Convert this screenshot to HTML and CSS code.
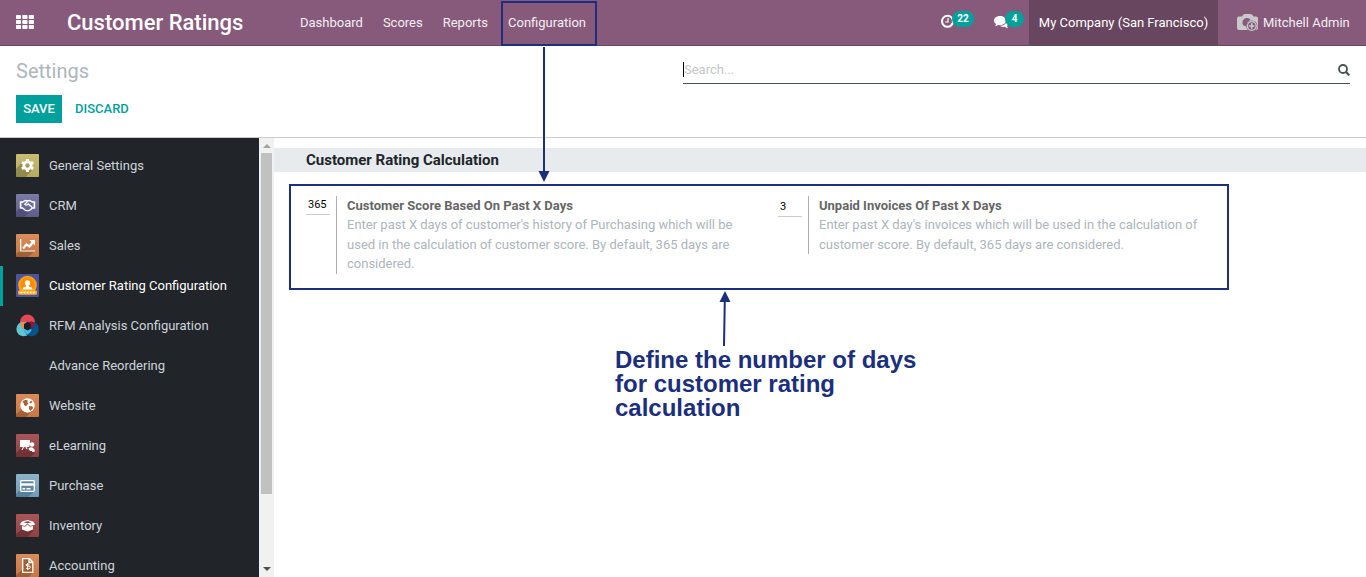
FILE: index.html
```html
<!DOCTYPE html>
<html lang="en">
<head>
<meta charset="utf-8">
<title>Settings - Customer Ratings</title>
<link rel="stylesheet" href="styles.css">
</head>
<body>
<header class="navbar">
  <svg class="apps" width="18" height="14" viewBox="0 0 18 14" fill="#fff"><rect width="5" height="4" rx=".8"/><rect x="6.3" width="5.2" height="4" rx=".8"/><rect x="12.8" width="5.2" height="4" rx=".8"/><rect y="5" width="5" height="4" rx=".8"/><rect x="6.3" y="5" width="5.2" height="4" rx=".8"/><rect x="12.8" y="5" width="5.2" height="4" rx=".8"/><rect y="10" width="5" height="4" rx=".8"/><rect x="6.3" y="10" width="5.2" height="4" rx=".8"/><rect x="12.8" y="10" width="5.2" height="4" rx=".8"/></svg>
  <div class="brand">Customer Ratings</div>
  <nav class="menu"><a>Dashboard</a><a>Scores</a><a>Reports</a><a class="marked">Configuration</a></nav>
  <div class="systray">
    <div class="tray clock"><svg width="13" height="14" viewBox="0 0 13 14" fill="none" stroke="#fff"><circle cx="6.5" cy="7.300" r="5.500" stroke-width="2"/><path d="M7 4v4H4.200" stroke-width="1.200"/></svg><span class="badge">22</span></div>
    <div class="tray chat"><svg width="15" height="13" viewBox="0 0 15 13" fill="#fff"><path d="M6 0c3.300 0 6 2 6 4.500S9.300 9 6 9c-.6 0-1.100 0-1.600-.2C3.300 9.700 2 10.200.9 10.200c.7-.7 1-1.300 1.100-2.200C.8 7.200 0 5.900 0 4.500 0 2 2.700 0 6 0z"/><path d="M13 3.400c1.200.8 2 1.900 2 3.200 0 1.400-.8 2.500-2 3.300.1.900.5 1.600 1.200 2.300-1.300 0-2.500-.5-3.600-1.400-1.900.4-3.900 0-5.300-1C9.500 9.900 13.300 7.700 13 3.400z"/></svg><span class="badge">4</span></div>
    <div class="company">My Company (San Francisco)</div>
    <div class="user"><svg width="22" height="18" viewBox="0 0 22 18"><path d="M2 2.500h3L6.500.6Q7 0 7.600 0h6.300q.6 0 1 .6l1.600 1.900H19q2 0 2 2V14q0 2-2 2H2q-2 0-2-2V4.500q0-2 2-2z" fill="#c9c9c9"/><path d="M6.500 11.500A4.400 4.400 0 0 1 13.500 5.700L10 8.500v4z" fill="#875a7b"/><circle cx="14.800" cy="12" r="5.600" fill="#875a7b"/><circle cx="14.800" cy="12" r="4.400" fill="#875a7b" stroke="#c9c9c9" stroke-width="1.400"/><path d="M14.800 9.300v5.400M12.100 12h5.400" stroke="#c9c9c9" stroke-width="1.600"/></svg>Mitchell Admin</div>
  </div>
</header>
<section class="control">
  <div class="control-left">
    <h1>Settings</h1>
    <div class="buttons"><button class="save">SAVE</button><button class="discard">DISCARD</button></div>
  </div>
  <div class="search"><span class="caret"></span><span class="placeholder">Search...</span><svg width="12" height="12" viewBox="0 0 12 12" fill="none" stroke="#495057"><circle cx="5" cy="5" r="4" stroke-width="1.800"/><path d="M8 8l3.300 3.300" stroke-width="2.200"/></svg></div>
</section>
<main class="body">
  <aside class="sidebar">
    <div class="item"><svg class="icon" viewBox="0 0 23 23"><defs>
      <linearGradient id="gold" x2="0" y2="1"><stop stop-color="#c9bd70"/><stop offset="1" stop-color="#b5aa63"/></linearGradient>
      <linearGradient id="violet" x2="0" y2="1"><stop stop-color="#7c7ba5"/><stop offset="1" stop-color="#5d5c8b"/></linearGradient>
      <linearGradient id="orange" x2="0" y2="1"><stop stop-color="#dc8c5c"/><stop offset="1" stop-color="#c67744"/></linearGradient>
      <linearGradient id="red" x2="0" y2="1"><stop stop-color="#a85759"/><stop offset="1" stop-color="#8c4245"/></linearGradient>
      <linearGradient id="blue" x2="0" y2="1"><stop stop-color="#8db3ca"/><stop offset="1" stop-color="#6f9cb8"/></linearGradient></defs>
      <rect width="23" height="23" rx="1" fill="url(#gold)"/><path d="M7 7L0 15v8h10l6-7z" fill="#7e773e" opacity=".65"/><g fill="#fff"><circle cx="11.500" cy="11.500" r="5"/><path d="M10 5h3v13h-3z"/><path d="M10 5h3v13h-3z" transform="rotate(60 11.500 11.500)"/><path d="M10 5h3v13h-3z" transform="rotate(120 11.500 11.500)"/></g><circle cx="11.500" cy="11.500" r="2.200" fill="#a79d58"/></svg><span>General Settings</span></div>
    <div class="item"><svg class="icon" viewBox="0 0 23 23"><rect width="23" height="23" rx="1" fill="url(#violet)"/><path d="M4 14l-4 4v5h8l7-6z" fill="#44436c" opacity=".6"/><g fill="none" stroke="#fff" stroke-width="1.300"><path d="M4.500 8h2.200l2.500-1.600 2.300.6 2.300-.6L16.300 8h2.200M4.500 14h2l3 2.500 2 .3 2-.3 3-2.500h2"/><path d="M4.600 7.500v7M18.400 7.500v7" stroke-width="1.600"/><path d="M11.700 7.200l-3 3q1.300 1.800 3.600-.3l4 3.600"/></g></svg><span>CRM</span></div>
    <div class="item"><svg class="icon" viewBox="0 0 23 23"><rect width="23" height="23" rx="1" fill="url(#orange)"/><path d="M5 16l-5 4v3h12l7-6z" fill="#854a27" opacity=".55"/><path d="M4.700 5v12H19" fill="none" stroke="#fff" stroke-width="1.200"/><path d="M7 14.500l3.500-4 3 2L17 8" fill="none" stroke="#fff" stroke-width="2.200"/><path d="M13.500 6H19v5.500z" fill="#fff"/></svg><span>Sales</span></div>
    <div class="item active"><svg class="icon" viewBox="0 0 23 23"><rect width="23" height="23" rx="1" fill="#4c559b"/><circle cx="11.500" cy="11" r="9.300" fill="#ffa614"/><circle cx="11.500" cy="10.500" r="7.200" fill="#ff8c00"/><circle cx="11.500" cy="9" r="2.700" fill="#fff"/><path d="M6.500 15.500q0-2.500 3.500-3v-2h3v2q3.500.5 3.500 3z" fill="#fff"/><rect x="2" y="16.300" width="19" height="4.500" rx="1.500" fill="#ffb02a"/><path d="M4.500 18.500h14.500" stroke="#fff" stroke-width="1.300" stroke-dasharray="1.700 1.400"/></svg><span>Customer Rating Configuration</span></div>
    <div class="item"><svg class="icon" viewBox="0 0 23 23"><circle cx="11.500" cy="8" r="7.500" fill="#e34956"/><circle cx="7.700" cy="15" r="7.300" fill="#60c7d1"/><circle cx="15.500" cy="15" r="7.300" fill="#075386"/><path d="M4.500 9.500A7.500 7.500 0 0 1 13 10l-5.500 5Q4.500 13 4.500 9.500z" fill="#f38b3e"/><path d="M10.500 9q4-3 8-.3Q19 12 16 15z" fill="#8b1747"/><path d="M7.500 15h8q0 3-4 5.500Q8 18.500 7.500 15z" fill="#45b8e8"/><path d="M11.500 7.800l3.500 2.800-.5 4.400-3 1.500-3.500-2V10z" fill="#171f27"/></svg><span>RFM Analysis Configuration</span></div>
    <div class="item"><span class="icon"></span><span>Advance Reordering</span></div>
    <div class="item"><svg class="icon" viewBox="0 0 23 23"><rect width="23" height="23" rx="1" fill="url(#orange)"/><path d="M6 15l-6 5v3h10l7-7z" fill="#854a27" opacity=".55"/><circle cx="11.500" cy="11.500" r="7.200" fill="#fff"/><path d="M7.500 6.500l3-.8 1.500 1-1 1.300 1.500 1.200-2.500 3-2-1.200-.2-2-1.300-.5zM15 6.500l1.500 1.600-2 1.400-1-1zM13 12l3.500.5.6 1.500-2.700 3-1.400-2z" fill="#a46338"/></svg><span>Website</span></div>
    <div class="item"><svg class="icon" viewBox="0 0 23 23"><rect width="23" height="23" rx="1" fill="url(#red)"/><path d="M5 14l-5 5v4h15l4-5z" fill="#5e272c" opacity=".6"/><path d="M4 6h10v4l-1 3H4z" fill="#fff"/><path d="M7.500 13L6 16M10 13l1 2" stroke="#fff"/><circle cx="16" cy="10.500" r="2.300" fill="#fff"/><path d="M12.500 14.500q3.500-2.500 5.500.5v2h-4z" fill="#fff"/><circle cx="17.300" cy="16.500" r="1.600" fill="#fff"/></svg><span>eLearning</span></div>
    <div class="item"><svg class="icon" viewBox="0 0 23 23"><rect width="23" height="23" rx="1" fill="url(#blue)"/><path d="M4 16l-4 4v3h12l7-6z" fill="#456e88" opacity=".6"/><rect x="4.700" y="6.700" width="13.600" height="10.600" rx=".7" fill="#6389a0" stroke="#fff" stroke-width="1.300"/><path d="M4.500 10.500h14" stroke="#fff" stroke-width="2.400"/><path d="M6.500 14.700h2.700M10.500 14.700h4" stroke="#fff" stroke-width="1.400"/></svg><span>Purchase</span></div>
    <div class="item"><svg class="icon" viewBox="0 0 23 23"><rect width="23" height="23" rx="1" fill="url(#red)"/><path d="M6 15l-6 5v3h12l6-7z" fill="#5e272c" opacity=".6"/><path d="M6 7.500l5.500-1.500L17 7.500l2.300 3-5 1.500-2.800-2.500L8.700 12l-5-1.500z" fill="#fff"/><path d="M6 12l3 .8 2.500-2.300 2.500 2.300 3-.8v3.500l-5.500 2-5.500-2z" fill="#fff"/><path d="M7.500 8.300l4-1 4 1-4 1z" fill="#883c40"/></svg><span>Inventory</span></div>
    <div class="item"><svg class="icon" viewBox="0 0 23 23"><rect width="23" height="23" rx="1" fill="url(#orange)"/><path d="M7 15l-7 6v2h13l4-5z" fill="#854a27" opacity=".55"/><path d="M6.700 4.700h6.800l3.300 3.300v10.300H6.700zM13 5v3.500h3.500" fill="#9d6038" stroke="#fff" stroke-width="1.300"/><path d="M13.500 10.300q-3.500-1-3.500.6t3 1.300.3 2.500q-1.600.4-3-.3M11.700 9v7" fill="none" stroke="#fff"/></svg><span>Accounting</span></div>
  </aside>
  <div class="scrollbar"><span class="up"></span><span class="thumb"></span><span class="down"></span></div>
  <section class="content">
    <h2>Customer Rating Calculation</h2>
    <div class="settings">
      <div class="setting"><div class="value">365</div><div class="description tall"><strong>Customer Score Based On Past X Days</strong><p>Enter past X days of customer's history of Purchasing which will be<br>used in the calculation of customer score. By default, 365 days are<br>considered.</p></div></div>
      <div class="setting"><div class="value second">3</div><div class="description"><strong>Unpaid Invoices Of Past X Days</strong><p>Enter past X day's invoices which will be used in the calculation of<br>customer score. By default, 365 days are considered.</p></div></div>
    </div>
    <p class="callout">Define the number of days<br>for customer rating<br>calculation</p>
  </section>
</main>
<svg class="arrows" width="1366" height="577" viewBox="0 0 1366 577"><g fill="#1b2f7c" stroke="#1b2f7c"><path d="M544 47v126" stroke-width="2"/><path d="M538.500 171h11l-5.500 11z" stroke="none"/><path d="M724 346l.8-46" stroke-width="2"/><path d="M719.500 302h11L725 291z" stroke="none"/></g></svg>
</body>
</html>
```
FILE: styles.css
```css
* { box-sizing: border-box; }
body { margin: 0; width: 1366px; height: 577px; overflow: hidden; position: relative; display: flex; flex-direction: column; background: #fff; font: 13px/19.5px Roboto, sans-serif; color: #4c4c4c; }
h1, h2, p { margin: 0; }
.navbar { height: 46px; flex: none; display: flex; background: #875a7b; border-bottom: 1px solid #68465f; color: #f3eef2; line-height: 45px; }
.apps { margin: 15px 0 0 16px; flex: none; }
.brand { width: 223px; margin-left: 33px; font-size: 22px; font-weight: 500; color: #fff; white-space: nowrap; }
.menu { display: flex; }
.menu a { padding: 0 10px; }
.menu .marked { height: 45px; width: 96px; margin: 1px 0 0 3px; padding: 0 5px; line-height: 39px; border: 2px solid #1b2f7c; }
.systray { display: flex; margin-left: auto; white-space: nowrap; }
.tray { display: flex; align-items: flex-start; }
.tray svg { flex: none; margin-top: 14px; }
.clock { width: 53px; }
.chat { width: 35px; }
.chat svg { margin-top: 16px; }
.badge { z-index: 1; margin: 11px 0 0 -2px; width: 22px; height: 16px; border-radius: 8px; background: #00a09d; color: #fff; text-align: center; font-size: 10px; line-height: 16px; font-weight: 700; }
.chat .badge { width: 19px; margin-left: -4px; }
.company { width: 189px; text-align: center; background: #68465f; color: #fff; }
.user { width: 148px; display: flex; padding-left: 19px; }
.user svg { margin: 14px 4px 0 0; flex: none; }
.control { height: 92px; flex: none; display: flex; justify-content: space-between; padding: 0 16px; border-bottom: 1px solid #cccccc; }
.control h1 { margin-top: 10px; font-size: 20px; line-height: 30px; font-weight: 400; color: #adb5bd; }
.buttons { display: flex; margin-top: 9px; }
button { height: 28px; border: 0; padding: 0 7px 2px; background: none; color: #00a09d; font: 500 13px Roboto, sans-serif; }
.save { width: 46px; background: #00a09d; color: #fff; }
.discard { margin-left: 6px; }
.search { width: 667px; height: 26px; margin-top: 12px; display: flex; align-items: center; border-bottom: 1px solid #495057; }
.caret { width: 1px; height: 15px; background: #000; margin-top: -2px; }
.placeholder { color: #c2c6ca; margin-top: -2px; }
.search svg { margin: -2px 0 0 auto; }
.body { flex: 1; min-height: 0; display: flex; }
.sidebar { width: 259px; padding-top: 8px; background: #212529; overflow: hidden; color: #ced4da; }
.item { height: 40px; padding: 0 16px; display: flex; align-items: center; white-space: nowrap; }
.icon { width: 23px; height: 23px; flex: none; margin: 0 10px 1px 0; }
.active { color: #fff; border-left: 3px solid #00a09d; padding-left: 13px; }
.scrollbar { width: 15px; background: #f1f1f1; display: flex; flex-direction: column; align-items: center; }
.up { margin-top: 6px; border: 4px solid transparent; border-top: 0; border-bottom-color: #a3a3a3; }
.thumb { width: 11px; height: 341px; margin-top: 5px; background: #c1c1c1; }
.down { margin: auto 0 6px; border: 4px solid transparent; border-bottom: 0; border-top-color: #505050; }
.content { flex: 1; padding-top: 10px; }
h2 { height: 24px; padding-left: 32px; font-size: 15px; line-height: 24px; background: #e7ebed; color: #212529; }
.settings { width: 940px; height: 106px; margin: 12px 0 0 15px; padding: 10px 15px; display: flex; border: 2px solid #1b2f7c; }
.setting { width: 472px; flex: none; display: flex; align-items: flex-start; white-space: nowrap; }
.value { width: 24px; height: 19px; padding-left: 2px; font-size: 11px; line-height: 17px; color: #000; border-bottom: 1px solid #ccc; }
.second { height: 21px; line-height: 21px; }
.description { height: 58px; margin-left: 6px; padding-left: 10px; border-left: 1px solid #adadad; color: #adb5bd; }
.tall { height: 78px; }
.description strong { display: block; color: #666; font-weight: 700; height: 19px; }
.callout { margin: 58px 0 0 341px; font: 700 24px/24px "Liberation Sans", Arial, sans-serif; color: #1b2f7c; }
.arrows { position: absolute; left: 0; top: 0; pointer-events: none; }
```
